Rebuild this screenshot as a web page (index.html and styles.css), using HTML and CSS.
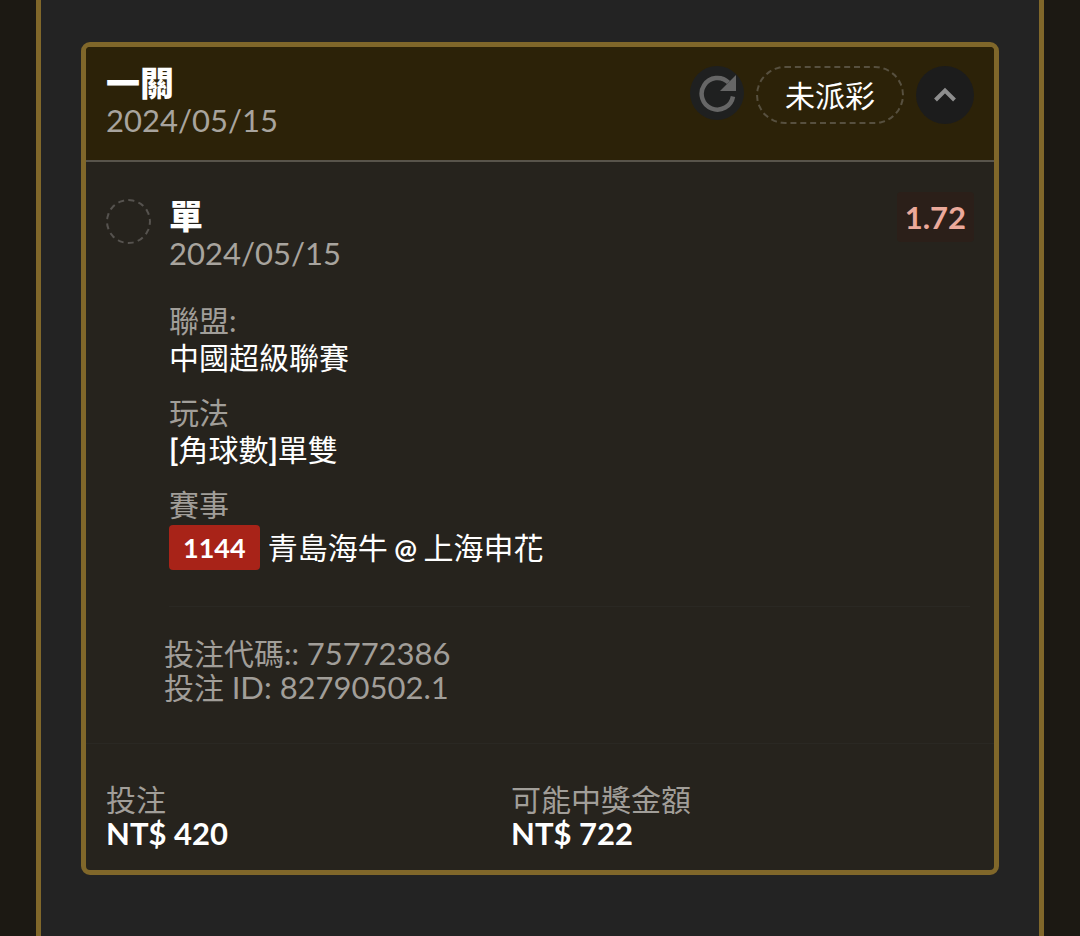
FILE: index.html
```html
<!DOCTYPE html>
<html lang="zh-Hant">
<head>
<meta charset="utf-8">
<meta name="viewport" content="width=device-width, initial-scale=1">
<title>投注</title>
<link rel="stylesheet" href="styles.css">
</head>
<body>
<main class="panel">
  <article class="card">
    <header class="card-header">
      <div class="heading">
        <h1 class="title">一關</h1>
        <time class="date" datetime="2024-05-15">2024/05/15</time>
      </div>
      <div class="actions">
        <button class="refresh" type="button" aria-label="refresh">
          <svg width="38" height="38" viewBox="0 0 38 38" aria-hidden="true">
            <path d="M30.5 8.5A15.8 15.8 0 1 0 35 22.5" fill="none" stroke="currentColor" stroke-width="4.5"/>
            <path d="M38 1V17H22Z" fill="currentColor"/>
          </svg>
        </button>
        <span class="status">未派彩</span>
        <button class="toggle" type="button" aria-label="collapse">
          <svg width="24" height="16" viewBox="0 0 24 16" aria-hidden="true">
            <path d="M2.5 13L12 3.5L21.5 13" fill="none" stroke="currentColor" stroke-width="4"/>
          </svg>
        </button>
      </div>
    </header>
    <section class="bet">
      <span class="marker"></span>
      <div class="bet-main">
        <div class="bet-head">
          <div class="heading">
            <h2 class="title">單</h2>
            <time class="date" datetime="2024-05-15">2024/05/15</time>
          </div>
          <span class="odds">1.72</span>
        </div>
        <dl class="details">
          <div><dt>聯盟:</dt><dd>中國超級聯賽</dd></div>
          <div><dt>玩法</dt><dd><b>[</b>角球數<b>]</b>單雙</dd></div>
          <div><dt>賽事</dt><dd class="match"><span class="badge">1144</span><span>青島海牛<b class="versus"> @ </b>上海申花</span></dd></div>
        </dl>
      </div>
    </section>
    <section class="codes">
      <p>投注代碼:: <span class="number">75772386</span></p>
      <p>投注 <span class="number">ID: 82790502.1</span></p>
    </section>
    <dl class="totals">
      <div><dt>投注</dt><dd>NT$ 420</dd></div>
      <div><dt>可能中獎金額</dt><dd>NT$ 722</dd></div>
    </dl>
  </article>
</main>
</body>
</html>
```
FILE: styles.css
```css
* { box-sizing: border-box; }

body {
  margin: 0;
  padding: 0 36px;
  background: #1c1913;
  color: #fff;
  font-family: Lato, "Noto Sans CJK TC", sans-serif;
  font-size: 30px;
  line-height: 37px;
}

h1, h2, p, dl, dd { margin: 0; }

button {
  border: 0;
  padding: 0;
  display: flex;
  align-items: center;
  justify-content: center;
  border-radius: 50%;
  cursor: pointer;
}

.panel {
  min-height: 100vh;
  padding: 42px 40px;
  background: #232323;
  border: solid #80672a;
  border-width: 0 5px;
}

.card {
  background: #26231d;
  border: 5px solid #80672a;
  border-radius: 9px;
}

.card-header {
  display: flex;
  justify-content: space-between;
  align-items: flex-start;
  padding: 17px 20px 20px;
  background: #2c2208;
  border-bottom: 2px solid #58544b;
  border-radius: 4px 4px 0 0;
}

.title {
  font-size: 34px;
  font-weight: 900;
  line-height: 37px;
}

.date {
  display: block;
  color: #a8a49e;
  font-size: 31px;
  line-height: 38px;
}

.actions {
  display: flex;
  align-items: flex-start;
  gap: 12px;
  padding-top: 2px;
}

.refresh {
  width: 54px;
  height: 54px;
  background: #1f2020;
  color: #666;
}

.status {
  padding: 8px 27px;
  border: 2px dashed #57503f;
  border-radius: 29px;
  line-height: 38px;
}

.toggle {
  width: 58px;
  height: 58px;
  background: #1c1c1c;
  color: #8e8e8e;
}

.card-header .heading { padding-bottom: 1px; }

.bet {
  display: flex;
  align-items: flex-start;
  gap: 18px;
  padding: 35px 20px 0;
}

.marker {
  width: 45px;
  height: 45px;
  margin-top: 2px;
  border: 2px dashed #56534f;
  border-radius: 50%;
}

.bet-main { flex: 1; }

.bet-head {
  display: flex;
  justify-content: space-between;
  align-items: flex-start;
}

.odds {
  margin-top: -5px;
  padding: 0 8px;
  border-radius: 4px;
  background: #2b1f19;
  color: #eba99b;
  font-size: 31px;
  font-weight: 700;
  line-height: 50px;
}

.details {
  display: grid;
  gap: 18px;
  margin-top: 30px;
  margin-right: 4px;
  padding-bottom: 36px;
  border-bottom: 1px solid #2a2823;
}

dt, .codes { color: #a19e99; }

.match {
  display: flex;
  align-items: center;
  gap: 8px;
}

.details .match { margin-top: 2px; }

.versus { font-size: 27px; }

.badge {
  padding: 0 14px;
  border-radius: 4px;
  background: #a82318;
  font-size: 27px;
  font-weight: 700;
  line-height: 45px;
}

.codes {
  padding: 29px 20px 39px 78px;
  line-height: 34px;
}

.number { font-size: 31px; }

.totals {
  display: grid;
  grid-template-columns: 7fr 8fr;
  padding: 38px 20px 20px;
  border-top: 1px solid #2a2823;
  line-height: 34px;
}

.totals dd {
  font-size: 31px;
  font-weight: 700;
}
```
